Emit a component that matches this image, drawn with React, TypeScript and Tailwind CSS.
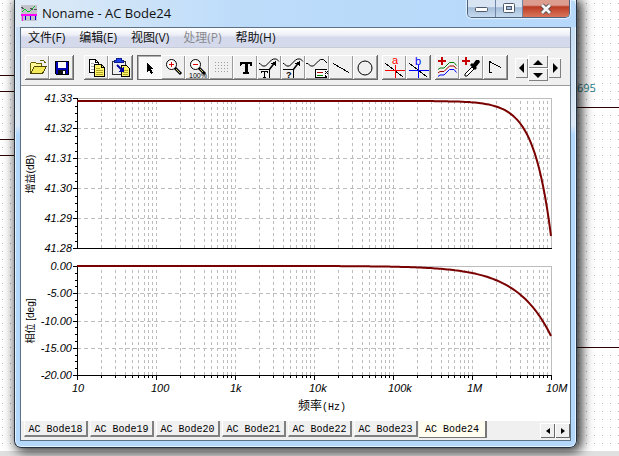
import type { ReactNode } from "react";

const UI_FONT = "font-['Open_Sans','Noto_Sans_CJK_SC',sans-serif]";

/* ---------- toolbar ---------- */

function Glyph({ children }: { children: ReactNode }) {
  return (
    <svg viewBox="0 0 24 24" className="block h-6 w-6" fill="none" stroke="#000" shapeRendering="crispEdges" aria-hidden="true">
      {children}
    </svg>
  );
}

function Tool({ label, pressed, children }: { label: string; pressed?: boolean; children: ReactNode }) {
  return (
    <button
      type="button"
      aria-label={label}
      aria-pressed={pressed}
      className={
        pressed
          ? "h-6 w-6 shrink-0 bg-[#fafafa] shadow-[inset_1px_1px_0_#6a6a6a,inset_2px_2px_0_#b0b0b0]"
          : "h-6 w-6 shrink-0 bg-[#f0f0f0] shadow-[inset_1px_1px_0_#fff,inset_-1px_-1px_0_#9a9a9a]"
      }
    >
      <Glyph>{children}</Glyph>
    </button>
  );
}

function ToolGroup({ children }: { children: ReactNode }) {
  return <div className="flex shrink-0 border-r border-b border-[#696969]">{children}</div>;
}

function NavButton({ label, size, points }: { label: string; size: "side" | "middle"; points: string }) {
  return (
    <button
      type="button"
      aria-label={label}
      className={
        (size === "side" ? "h-5 w-[13px]" : "h-[13px] w-5") +
        " flex items-center justify-center bg-[#f0f0f0] shadow-[inset_1px_1px_0_#fff,inset_-1px_-1px_0_#808080]"
      }
    >
      <svg viewBox="0 0 10 10" className="h-[10px] w-[10px] shrink-0" aria-hidden="true">
        <polygon points={points} fill="#000" />
      </svg>
    </button>
  );
}

function CurveArrow() {
  return (
    <>
      <path d="M2 8.5H3L5.5 11H8.5L14.5 5L16.5 4H19.5L22 6.5" shapeRendering="auto" />
      <path d="M12 15L17 8.5" shapeRendering="auto" strokeWidth="1.5" />
      <path d="M19 6V11L14.5 8.5Z" fill="#000" stroke="none" />
      <path d="M2 14.5H12.5V23" />
    </>
  );
}

function Toolbar() {
  return (
    <div role="toolbar" className="flex h-[38px] items-start border-b border-[#9a9a9a] bg-[#f0f0f0] pt-[7px] pl-1">
      <ToolGroup>
        <Tool label="Open">
          <path d="M5.5 18V8.5L6.5 7.5H10.5L11.5 8.5H16.5V11" fill="#fff799" stroke="#6b6400" />
          <path d="M5.5 18.5L9.5 11.5H21.5L17.5 18.5Z" fill="#f3e95a" stroke="#4d4800" />
          <path d="M15 5.5H18.5L20.5 8" stroke="#6b6400" />
        </Tool>
        <Tool label="Save">
          <path d="M6.5 6.5H19.5V19.5H7.5L6.5 18.5Z" fill="#0000b4" />
          <rect x="9" y="7" width="8" height="6" fill="#fff" stroke="none" />
          <rect x="9" y="15" width="8" height="4" fill="#111" stroke="none" />
          <rect x="14" y="16" width="2" height="3" fill="#fff" stroke="none" />
        </Tool>
      </ToolGroup>
      <div className="w-[10px]" />
      <ToolGroup>
        <Tool label="Copy">
          <path d="M5.5 4.5H11.5L14.5 7.5V17.5H5.5Z" fill="#fff" />
          <path d="M11.5 4.5V7.5H14.5" />
          <path d="M7 8.5H10M7 11.5H10M7 14.5H10" stroke="#aaa" />
          <path d="M10.5 9.5H17.5L20.5 12.5V21.5H10.5Z" fill="#fff36b" />
          <path d="M17.5 9.5V12.5H20.5" />
          <path d="M12 13.5H16M12 15.5H19M12 17.5H19M12 19.5H19" stroke="#b3a624" />
        </Tool>
        <Tool label="Paste">
          <rect x="4.5" y="6.5" width="13" height="13" fill="#eee" stroke="#333" />
          <path d="M6.5 7.5V5.5H8.5V3.5H13.5V5.5H15.5V7.5Z" fill="#1d3df0" stroke="#0a1e8c" />
          <path d="M13.5 10.5H18.5L21.5 13.5V21.5H13.5Z" fill="#fff36b" />
          <path d="M15 15.5H20M15 17.5H20M15 19.5H20" stroke="#b3a624" />
          <path d="M9 10L14 15" stroke="#0000a0" strokeWidth="2" shapeRendering="auto" />
          <path d="M16 11V17H10Z" fill="#0000a0" stroke="none" />
        </Tool>
      </ToolGroup>
      <div className="w-1" />
      <ToolGroup>
        <Tool label="Select" pressed>
          <path d="M10 8V17L12 15L14 19L16 18L14 14H17Z" fill="#000" stroke="none" />
        </Tool>
        <Tool label="Zoom in">
          <circle cx="10.5" cy="9.5" r="5" fill="#fff" shapeRendering="auto" />
          <path d="M10.5 7V12M8 9.5H13" stroke="#e00000" />
          <path d="M14 13L20 19" strokeWidth="3" shapeRendering="auto" />
          <path d="M15 14L19 18" stroke="#d6cf66" shapeRendering="auto" />
        </Tool>
        <Tool label="Zoom 100%">
          <circle cx="10.5" cy="9.5" r="5" fill="#fff" shapeRendering="auto" />
          <path d="M8 9.5H13" stroke="#e00000" />
          <path d="M14 13L20 19" strokeWidth="3" shapeRendering="auto" />
          <path d="M15 14L18 17" stroke="#d6cf66" shapeRendering="auto" />
          <text x="4" y="23" fontSize="7" fontFamily="Liberation Sans, sans-serif" fill="#000" stroke="none">100%</text>
        </Tool>
        <Tool label="Grid">
          {[7, 10, 13, 16].map((y) => (
            <path key={y} d={`M6 ${y}.5H19`} stroke="#a0a0a0" strokeDasharray="1 2" />
          ))}
        </Tool>
        <Tool label="Text">
          <path d="M7 7H19V10.5H17.5L17 9H14.5V17H16V19H10V17H11.5V9H9L8.5 10.5H7Z" fill="#000" stroke="none" />
        </Tool>
        <Tool label="Curve label">
          <CurveArrow />
          <path d="M4.5 18V16.5H10.5V18M7.5 17V22M6 22.5H9" />
        </Tool>
        <Tool label="Curve query">
          <CurveArrow />
          <text x="5" y="23" fontSize="9" fontWeight="bold" fontFamily="Liberation Sans, sans-serif" fill="#000" stroke="none">?</text>
        </Tool>
        <Tool label="Legend">
          <path d="M1 8.5H3L5.5 11H8.5L13.5 6L15.5 4.5H18.5L22 8" shapeRendering="auto" />
          <path d="M22 14.5H10.5V22.5H22" fill="#fff" />
          <path d="M12 17.5H18" stroke="#b00000" />
          <path d="M12 20.5H18" stroke="#008000" />
          <path d="M20 16V17M22 16V17M21 17V18M20 18V19M22 18V19M20 20V22M21 21V22" />
        </Tool>
        <Tool label="Line">
          <path d="M4 8.5L20 17.5" />
        </Tool>
        <Tool label="Ellipse">
          <circle cx="12" cy="13" r="7" shapeRendering="auto" />
        </Tool>
      </ToolGroup>
      <div className="w-1" />
      <ToolGroup>
        <Tool label="Cursor a">
          <path d="M3 8L21 22" />
          <path d="M3 15.5H23M13.5 10V23" stroke="#f00" />
          <text x="10" y="9" fontSize="11" fontFamily="Liberation Sans, sans-serif" fill="#f00" stroke="none">a</text>
        </Tool>
        <Tool label="Cursor b">
          <path d="M3 8L21 22" />
          <path d="M3 15.5H23M12.5 10V23" stroke="#00f" />
          <text x="9" y="10" fontSize="11" fontFamily="Liberation Sans, sans-serif" fill="#00f" stroke="none">b</text>
        </Tool>
      </ToolGroup>
      <div className="w-1" />
      <ToolGroup>
        <Tool label="Add curves">
          <path d="M7 2V10M3 6H11" stroke="#c40000" strokeWidth="2" />
          <g shapeRendering="auto">
            <path d="M3 14.5L5 13H9L14.5 7.5H19L21.5 10.5" stroke="#008000" />
            <path d="M3 18L5 16.5H9L14.5 11H19L21.5 14" stroke="#a00000" />
            <path d="M3 21.5L5 20H9L14.5 14.5H19L21.5 17.5" stroke="#00f" />
          </g>
        </Tool>
        <Tool label="Pick curve">
          <path d="M7 2V10M3 6H11" stroke="#c40000" strokeWidth="2" />
          <path d="M6 21V19L13 12L15 14L8 21Z" fill="#fff" shapeRendering="auto" />
          <path d="M11 10L13 8L14 9L17 5H20L21 7L17 12L18 13L16 15Z" fill="#000" stroke="none" shapeRendering="auto" />
        </Tool>
        <Tool label="Marker">
          <path d="M6.5 17V6.5L18 12.5M6 17.5H9" />
        </Tool>
      </ToolGroup>
      <div className="w-[7px]" />
      <div className="flex shrink-0 items-center">
        <NavButton label="Previous" size="side" points="7,0 7,10 2,5" />
        <div className="flex flex-col">
          <NavButton label="Up" size="middle" points="0,8 10,8 5,3" />
          <NavButton label="Down" size="middle" points="0,3 10,3 5,8" />
        </div>
        <NavButton label="Next" size="side" points="3,0 3,10 8,5" />
      </div>
    </div>
  );
}

/* ---------- chart ---------- */

const X0 = 56;
const DECADE = 79;
const X1 = X0 + DECADE * 6;
const GAIN = { top: 12, bottom: 162, labels: ["41.33", "41.32", "41.31", "41.30", "41.29", "41.28"] };
const PHASE = { top: 180, bottom: 289, labels: ["0.00", "-5.00", "-10.00", "-15.00", "-20.00"] };
const FREQS = ["10", "100", "1k", "10k", "100k", "1M", "10M"];

const logTicks = Array.from({ length: 6 }, (_, d) =>
  [1, 2, 3, 4, 5, 6, 7, 8, 9].map((n) => ({ x: Math.round(X0 + DECADE * (d + Math.log10(n))), major: n === 1 })),
)
  .flat()
  .concat({ x: X1, major: true });

function curve(y: (ratio: number) => number) {
  const pts: string[] = [];
  for (let x = X0; x <= X1; x += 2) pts.push(`${x},${y(10 ** ((x - X1) / DECADE)).toFixed(1)}`);
  return pts.join(" ");
}

function Plot({ area, points, xTicks }: { area: typeof GAIN; points: string; xTicks?: boolean }) {
  const step = (area.bottom - area.top) / (area.labels.length - 1);
  return (
    <g>
      <g stroke="#bdbdbd" fill="none">
        <path d={`M${X0} ${area.top + 0.5}H${X1 + 0.5}V${area.bottom}`} />
        {logTicks.slice(1, -1).map(({ x }) => (
          <path key={x} d={`M${x + 0.5} ${area.bottom}V${area.top}`} strokeDasharray="3 3" />
        ))}
        {area.labels.slice(1, -1).map((label, i) => (
          <path key={label} d={`M${X0} ${Math.round(area.top + step * (i + 1)) + 0.5}H${X1}`} strokeDasharray="4 3" />
        ))}
      </g>
      <g stroke="#000" fill="none">
        <path d={`M${X0 + 0.5} ${area.top}V${area.bottom + 0.5}H${X1 + 1}`} />
        {Array.from({ length: (area.labels.length - 1) * 4 + 1 }, (_, i) => (
          <path key={i} d={`M${X0 - (i % 4 ? 2 : 4)} ${Math.round(area.top + (step * i) / 4) + 0.5}H${X0}`} />
        ))}
        {xTicks &&
          logTicks.map(({ x, major }) => <path key={x} d={`M${x + 0.5} ${area.bottom}v${major ? 5 : 3}`} />)}
      </g>
      {area.labels.map((label, i) => (
        <text key={label} x={X0 - 5} y={Math.round(area.top + step * i) + 4} textAnchor="end" fontStyle="italic">
          {label}
        </text>
      ))}
      <polyline points={points} fill="none" stroke="#7a0000" strokeWidth="2" shapeRendering="auto" />
    </g>
  );
}

function Chart() {
  return (
    <svg
      viewBox="0 0 549 335"
      className="block w-full bg-white"
      role="img"
      aria-label="Bode plot"
      shapeRendering="crispEdges"
      fontFamily="Liberation Sans, Noto Sans CJK SC, sans-serif"
      fontSize="11"
    >
      <Plot area={GAIN} points={curve((f) => 15 + 135 * f * f)} />
      <Plot area={PHASE} points={curve((f) => 180 + 70 * f)} xTicks />
      {FREQS.map((label, i) => (
        <text key={label} x={X0 + DECADE * i - 5} y="306" fontStyle="italic">
          {label}
        </text>
      ))}
      <text transform="translate(13 88) rotate(-90)" textAnchor="middle" fontSize="10">增益(dB)</text>
      <text transform="translate(13 235) rotate(-90)" textAnchor="middle" fontSize="10">相位 [deg]</text>
      <text x="301" y="324" textAnchor="middle" fontSize="12">
        频率<tspan fontFamily="Liberation Mono, monospace" fontSize="10">(Hz)</tspan>
      </text>
    </svg>
  );
}

/* ---------- window ---------- */

function TitleBar() {
  return (
    <div className="flex h-[27px] items-start pl-[6px] pr-[6px]">
      <svg viewBox="0 0 16 16" className="mt-[5px] h-4 w-4 shrink-0" shapeRendering="crispEdges" aria-hidden="true">
        <rect width="16" height="16" fill="#c3c3cc" />
        <path d="M1 7L4 4L6 6L9 6L14 1" stroke="#00c030" fill="none" />
        <path d="M0 2L3 4M9 3L12 5M13 4H16" stroke="#555" fill="none" />
        <path d="M0 9.5H16" stroke="#f0f" strokeWidth="2" />
        <path d="M4.5 11V15M9.5 11V15M14.5 11V15" stroke="#00c" />
        <path d="M1 10V16" stroke="#f0f" />
      </svg>
      <h1 className="ml-[5px] mt-1 flex-1 text-[13px] leading-[18px] text-[#111] whitespace-nowrap">Noname - AC Bode24</h1>
      <div className="flex h-[18px] overflow-hidden rounded-b-[5px] border border-t-0 border-[#4d6380] shadow-[0_0_1px_1px_#e6f2ff]">
        <button type="button" aria-label="Minimize" className="flex w-7 items-center justify-center border-r border-[#6f87a5] bg-linear-to-b from-[#d8e4f1] from-40% via-[#a5bdd8] via-45% to-[#c6dbf0]">
          <svg viewBox="0 0 13 11" className="h-[11px] w-[13px]" aria-hidden="true">
            <rect x="0.5" y="4.5" width="12" height="4" rx="1" fill="#fff" stroke="#4e5a6b" />
          </svg>
        </button>
        <button type="button" aria-label="Maximize" className="flex w-[27px] items-center justify-center border-r border-[#6f87a5] bg-linear-to-b from-[#d8e4f1] from-40% via-[#a5bdd8] via-45% to-[#c6dbf0]">
          <svg viewBox="0 0 12 11" className="h-[11px] w-3" aria-hidden="true">
            <rect x="0.5" y="0.5" width="11" height="9" rx="1" fill="#fff" stroke="#4e5a6b" />
            <rect x="3.5" y="3.5" width="5" height="3" fill="#a5bdd8" stroke="#4e5a6b" />
          </svg>
        </button>
        <button type="button" aria-label="Close" className="flex w-[46px] items-center justify-center bg-linear-to-b from-[#dc9c8e] from-30% via-[#bb3a22] via-40% to-[#d9755a]">
          <svg viewBox="0 0 14 12" className="h-3 w-[14px]" aria-hidden="true">
            <path d="M3 2L11 10M11 2L3 10" stroke="#4a4550" strokeWidth="4.5" />
            <path d="M3 2L11 10M11 2L3 10" stroke="#f5f5f5" strokeWidth="2.8" />
          </svg>
        </button>
      </div>
    </div>
  );
}

const MENUS = ["文件(F)", "编辑(E)", "视图(V)", "处理(P)", "帮助(H)"];

function MenuBar() {
  return (
    <nav className="flex h-5 items-end gap-[14px] border-b border-[#c8cbd8] bg-linear-to-b from-white from-0% via-[#eef0f8] via-35% to-[#d4daec] to-50% pl-[7px]">
      {MENUS.map((m) => (
        <button key={m} type="button" disabled={m.startsWith("处理")} className="text-xs leading-[18px] whitespace-nowrap text-[#111] disabled:text-[#8a8a8e]">
          {m}
        </button>
      ))}
    </nav>
  );
}

const TABS = ["18", "19", "20", "21", "22", "23", "24"];

function TabStrip() {
  return (
    <div className="flex h-[19px] items-start bg-[#f0f0f0] pl-[3px]">
      <div role="tablist" className="flex flex-1 gap-[2px] font-['Liberation_Mono',monospace] text-[10px] whitespace-nowrap">
        {TABS.map((n) =>
          n === "24" ? (
            <button key={n} type="button" role="tab" aria-selected className="-ml-px h-[17px] w-[68px] border-r-2 border-b border-[#777] bg-[#fffdf0] text-black">
              AC Bode{n}
            </button>
          ) : (
            <button key={n} type="button" role="tab" aria-selected={false} className="h-4 w-16 border-r-2 border-b-2 border-[#808080] border-l border-l-white bg-[#f0f0f0] pt-px text-black">
              AC Bode{n}
            </button>
          ),
        )}
      </div>
      {["Scroll left", "Scroll right"].map((label, i) => (
        <button key={label} type="button" aria-label={label} className="mt-[2px] flex h-[15px] w-[15px] items-center justify-center bg-[#f0f0f0] shadow-[inset_1px_1px_0_#fff,inset_-1px_-1px_0_#696969]">
          <svg viewBox="0 0 6 6" className="h-[6px] w-[6px]" aria-hidden="true">
            <polygon points={i ? "1,0 1,6 5,3" : "5,0 5,6 1,3"} />
          </svg>
        </button>
      ))}
    </div>
  );
}

function SheetWires({ className, ys }: { className: string; ys: string[] }) {
  return (
    <div className={className}>
      {ys.map((gap, i) => (
        <div key={i} className={gap + " h-px w-full bg-[#2a0000]"} />
      ))}
    </div>
  );
}

export default function App() {
  return (
    <div className={"flex min-h-screen flex-col overflow-hidden bg-white " + UI_FONT}>
      <div className="flex flex-1 items-start bg-[radial-gradient(circle_at_0.5px_0.5px,#b4b4b4_0.6px,transparent_0.7px)] bg-[length:8px_8px] bg-[position:2px_3px]">
        <SheetWires className="w-[14px] shrink-0 pt-[75px]" ys={["", "mt-[15px]", "mt-[47px]", "mt-[15px]"]} />
        <main className="relative z-10 min-w-0 flex-1 rounded-b-[7px] border border-t-0 border-[#26323f] bg-linear-to-b from-[#c2dcf6] from-0% via-[#dce8f5] via-28% to-[#b4d8fc] to-30% shadow-[3px_2px_12px_2px_rgba(0,0,0,0.8),inset_0_0_0_1px_#e4f2ff]">
          <div className="rounded-tr-[6px] bg-linear-to-r from-[#dfebf6] via-[#bddcfa] via-40% to-[#b6d8fa]">
            <TitleBar />
          </div>
          <div className="mx-[5px] mb-[6px] border border-[#5c7186] bg-white">
            <MenuBar />
            <Toolbar />
            <Chart />
            <TabStrip />
          </div>
        </main>
        <div className="w-[42px] shrink-0 pt-[82px]">
          <span className="block h-3 pr-7 text-right text-[11px] leading-3 text-[#1f8088]">695</span>
          <SheetWires className="pt-[13px]" ys={["", "mt-[239px]"]} />
        </div>
      </div>
      <div className="h-[5px] shrink-0 bg-[#e0e0e0]" />
    </div>
  );
}
